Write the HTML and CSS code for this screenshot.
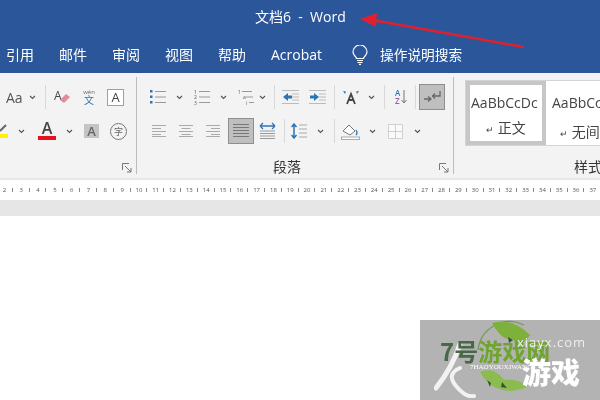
FILE: index.html
```html
<!DOCTYPE html>
<html lang="zh">
<head>
<meta charset="utf-8">
<title>文档6 - Word</title>
<link rel="stylesheet" href="styles.css">
</head>
<body>
<div class="app">
  <header class="head">
    <div class="title">文档6&nbsp; -&nbsp; Word</div>
    <nav class="tabs">
      <span class="tab">引用</span>
      <span class="tab t2">邮件</span>
      <span class="tab t2">审阅</span>
      <span class="tab t2">视图</span>
      <span class="tab t2">帮助</span>
      <span class="tab t2">Acrobat</span>
      <svg class="bulb" width="16" height="20" viewBox="0 0 16 20" fill="none" stroke="#fff" stroke-width="1.2"><path d="M4.5 13.5C4.300 11.500 1 10.500 1 7a7 7 0 0 1 14 0c0 3.500-3.300 4.500-3.500 6.500z"/><path d="M5 15.500h6M5.500 17.500h5M7 19.300h2"/></svg>
      <span class="tab search">操作说明搜索</span>
    </nav>
  </header>

  <section class="ribbon">
    <div class="group g1">
      <div class="row">
        <span class="aa">Aa</span>
        <svg class="chev c-aa" width="7" height="5" viewBox="0 0 7 5"><use href="#cv"/></svg>
        <i class="sep s-a"></i>
        <svg class="ic m1" width="16" height="18" viewBox="0 0 16 18"><text x="0" y="12" class="svgt" font-size="12" fill="#444">A</text><path d="M6 12l6-6 4 3-6 6z" fill="#e58a9b"/></svg>
        <span class="wen m2"><small>wén</small><b>文</b></span>
        <span class="boxa m3">A</span>
      </div>
      <div class="row r2">
        <svg class="ic" width="9" height="16" viewBox="0 0 9 16"><path d="M0 8l6-6" stroke="#666" stroke-width="2"/><rect y="11" width="8" height="4" fill="#fff200"/></svg>
        <svg class="chev m4" width="7" height="5" viewBox="0 0 7 5"><use href="#cv"/></svg>
        <span class="reda m5">A</span>
        <svg class="chev m6" width="7" height="5" viewBox="0 0 7 5"><use href="#cv"/></svg>
        <span class="graya m7">A</span>
        <span class="circ m8">字</span>
      </div>
      <svg class="launch" width="10" height="10" viewBox="0 0 10 10" fill="none" stroke="#777"><path d="M.5 7V.5H7M3 3l6 6M5 9h4V5"/></svg>
    </div>

    <div class="group g2">
      <div class="row">
        <svg class="ic l1" width="16" height="16" viewBox="0 0 16 16"><use href="#bul"/></svg>
        <svg class="chev l2" width="7" height="5" viewBox="0 0 7 5"><use href="#cv"/></svg>
        <svg class="ic l3" width="16" height="16" viewBox="0 0 16 16"><use href="#num"/></svg>
        <svg class="chev l2" width="7" height="5" viewBox="0 0 7 5"><use href="#cv"/></svg>
        <svg class="ic l3" width="16" height="16" viewBox="0 0 16 16"><use href="#mul"/></svg>
        <svg class="chev l4" width="7" height="5" viewBox="0 0 7 5"><use href="#cv"/></svg>
        <i class="sep l5"></i>
        <svg class="ic l6" width="17" height="14" viewBox="0 0 17 14"><use href="#lines"/><path d="M1 7l5-4v2.500h4v3H6V11z" fill="#2e75b6"/></svg>
        <svg class="ic l7" width="17" height="14" viewBox="0 0 17 14"><use href="#lines"/><path d="M10 7L5 3v2.500H1v3h4V11z" fill="#2e75b6"/></svg>
        <i class="sep l8"></i>
        <svg class="ic l9" width="16" height="15" viewBox="0 0 16 15"><path d="M4 14l4-10 4 10M5.500 10h5" fill="none" stroke="#444" stroke-width="1.800"/><path d="M0 1l3 .5L2 4zM16 1l-3 .5L14 4z" fill="#2e75b6"/></svg>
        <svg class="chev l10" width="7" height="5" viewBox="0 0 7 5"><use href="#cv"/></svg>
        <i class="sep l11"></i>
        <span class="az l12"><span class="az-t"><em>A</em><em class="z">Z</em></span><svg width="6" height="15" viewBox="0 0 6 15"><path d="M3 0v13M.5 10L3 13l2.500-3" fill="none" stroke="#777"/></svg></span>
        <i class="sep l13"></i>
        <span class="press pil"><svg width="17" height="14" viewBox="0 0 17 14" fill="none" stroke="#666" stroke-width="1.300"><path d="M16 1v5H9M11 3.500L8.500 6 11 8.500M0 9h6M4 6.500L7 9l-3 2.500"/></svg></span>
      </div>
      <div class="row r2">
        <svg class="ic b1" width="14" height="12" viewBox="0 0 14 12"><use href="#al"/></svg>
        <svg class="ic b2" width="14" height="12" viewBox="0 0 14 12"><use href="#ac"/></svg>
        <svg class="ic b2" width="14" height="12" viewBox="0 0 14 12"><use href="#ar"/></svg>
        <span class="press jus"><svg width="16" height="14" viewBox="0 0 16 14"><use href="#aj"/></svg></span>
        <svg class="ic b3" width="17" height="18" viewBox="0 0 17 18"><path d="M1 4h15M1 4l3-3M1 4l3 3M16 4l-3-3M16 4l-3 3" stroke="#2e75b6" fill="none" stroke-width="1.300"/><path d="M1 9h15M1 11.500h15M1 14h15M1 16.500h15" stroke="#999"/></svg>
        <i class="sep b4"></i>
        <svg class="ic b5" width="16" height="16" viewBox="0 0 16 16"><path d="M3 1v14M.5 4L3 1l2.500 3M.5 12L3 15l2.500-3" fill="none" stroke="#2e75b6" stroke-width="1.500"/><path d="M8 2h8M8 6h8M8 10h8M8 14h8" stroke="#aaa"/></svg>
        <svg class="chev b6" width="7" height="5" viewBox="0 0 7 5"><use href="#cv"/></svg>
        <i class="sep b7"></i>
        <svg class="ic b8" width="19" height="18" viewBox="0 0 19 18"><path d="M2 9l6-6 6 6-5 4z" fill="#fff" stroke="#777"/><path d="M15 8q2 3 0 5" stroke="#2e75b6" fill="none" stroke-width="1.300"/><rect x=".5" y="15" width="18" height="2.500" fill="#fff" stroke="#aaa"/></svg>
        <svg class="chev b9" width="7" height="5" viewBox="0 0 7 5"><use href="#cv"/></svg>
        <svg class="ic b10" width="15" height="15" viewBox="0 0 15 15" fill="#fafafa" stroke="#d0d0d0"><path d="M.5.500h14v14H.5zM7.500.500v14M.5 7.500h14"/></svg>
        <svg class="chev b11" width="7" height="5" viewBox="0 0 7 5"><use href="#cv"/></svg>
      </div>
      <div class="glabel">段落</div>
      <svg class="launch" width="10" height="10" viewBox="0 0 10 10" fill="none" stroke="#777"><path d="M.5 7V.5H7M3 3l6 6M5 9h4V5"/></svg>
    </div>

    <div class="group g3">
      <div class="gallery">
        <div class="style sel"><span class="sample">AaBbCcDc</span><span class="sname"><small>↵</small> 正文</span></div>
        <div class="style second"><span class="sample">AaBbCcDc</span><span class="sname"><small>↵</small> 无间隔</span></div>
      </div>
      <div class="glabel g3l">样式</div>
    </div>
  </section>

  <div class="ruler">
    <span>2</span><span>3</span><span>4</span><span>5</span><span>6</span><span>7</span><span>8</span><span>9</span><span>10</span><span>11</span><span>12</span><span>13</span><span>14</span><span>15</span><span>16</span><span>17</span><span>18</span><span>19</span><span>20</span><span>21</span><span>22</span><span>23</span><span>24</span><span>25</span><span>26</span><span>27</span><span>28</span><span>29</span><span>30</span><span>31</span><span>32</span><span>33</span><span>34</span><span>35</span><span>36</span><span>37</span>
  </div>
  <div class="band"></div>
  <main class="doc"></main>
</div>

<svg class="arrow" width="600" height="72" viewBox="0 0 600 72"><path d="M524 47L372 20" stroke="#e0202c" stroke-width="2.500" fill="none"/><path d="M360 19l17-6-1 14z" fill="#e0202c"/></svg>

<div class="mark">
  <svg class="ring" width="72" height="74" viewBox="0 0 72 74" fill="none"><path d="M6 30A32 32 0 0 1 52 5" stroke="#6f9a50" stroke-width="1.200"/><path d="M20 3q20-6 38 12q-8 14-18 4q-10 2-20-16z" fill="#7db13c"/><path d="M8 52A34 34 0 0 0 56 66q-12-8-24-6q-10-14-24-8z" fill="#8cbb50"/><path d="M36 17l5 3-4 3zM15 60l4 3-1 4zM30 62l5 6-6-1z" fill="#36543a"/></svg>
  <svg class="swoosh" width="44" height="56" viewBox="0 0 44 56" fill="none" stroke="#f2f2f2" stroke-linecap="round"><path d="M26 2Q18 26 2 46" stroke-width="5"/><path d="M26 26q-14 6-4 18t18 10" stroke-width="4"/></svg>
  <span class="seven"><span class="sv-a">7号</span><span class="sv-b">游戏网</span></span>
  <span class="url">xiayx.com</span>
  <span class="big">游戏</span>
  <span class="pin">7HAOYOUXIWANG</span>
</div>

<svg class="defs" width="0" height="0">
  <defs>
    <path id="cv" d="M1 1l2.500 2.500L6 1" fill="none" stroke="#555" stroke-width="1.100"/>
    <g id="bul"><path d="M5 2.500h11M5 8h11M5 13.500h11" stroke="#999"/><path d="M0 1h2.500v2.500H0zM0 6.500h2.500v2.500H0zM0 12h2.500v2.500H0z" fill="#2e75b6"/></g>
    <g id="num"><path d="M5 2.500h11M5 8h11M5 13.500h11" stroke="#999"/><text x="0" y="4.500" class="svgt" font-size="5" fill="#555">1</text><text x="0" y="10" class="svgt" font-size="5" fill="#555">2</text><text x="0" y="15.500" class="svgt" font-size="5" fill="#555">3</text></g>
    <g id="mul"><path d="M4 2.500h10M8 8h7M11 13.500h5" stroke="#999"/><text x="0" y="4.500" class="svgt" font-size="5" fill="#555">1</text><text x="5" y="10" class="svgt" font-size="5" fill="#555">a</text><text x="8" y="15.500" class="svgt" font-size="5" fill="#555">i</text></g>
    <g id="lines"><path d="M0 .500h17M10 4h7M10 7h7M10 10h7M0 13.500h17" stroke="#bbb"/></g>
    <path id="al" d="M0 .500h14M0 3.500h9M0 6.500h14M0 9.500h9M0 11.500h14" stroke="#aaa"/>
    <path id="ac" d="M0 .500h14M2.500 3.500h9M0 6.500h14M2.500 9.500h9M0 11.500h14" stroke="#aaa"/>
    <path id="ar" d="M0 .500h14M5 3.500h9M0 6.500h14M5 9.500h9M0 11.500h14" stroke="#aaa"/>
    <path id="aj" d="M0 .500h16M0 3.500h16M0 6.500h16M0 9.500h16M0 12.500h16" stroke="#777"/>
  </defs>
</svg>
</body>
</html>
```
FILE: styles.css
```css
* { box-sizing: border-box; }
html, body { margin: 0; padding: 0; }
body {
  width: 600px;
  height: 400px;
  overflow: hidden;
  position: relative;
  background: #fff;
  font-family: "Open Sans", "Noto Sans CJK SC", sans-serif;
  color: #444;
}
.app { width: 600px; height: 400px; display: flex; flex-direction: column; overflow: hidden; filter: blur(.35px); }

.head { height: 73px; background: #2b579a; color: #fff; flex: none; }
.title { height: 35px; padding-top: 6px; padding-left: 255px; font-size: 14px; line-height: 22px; white-space: nowrap; }
.tabs { display: flex; align-items: center; height: 38px; padding-left: 6px; padding-top: 2px; }
.tab { font-size: 14px; line-height: 20px; white-space: nowrap; }
.t2 { margin-left: 25px; }
.bulb { margin-left: 30px; flex: none; }
.tab.search { margin-left: 12px; font-size: 13.700px; }

.ribbon { height: 105px; background: #f3f3f3; display: flex; flex: none; }
.group { position: relative; flex: none; border-right: 1px solid #bdbdbd; margin: 4px 0; }
.g1 { width: 137px; }
.g2 { width: 317px; }
.g3 { border: 0; flex: 1; padding-left: 11px; }
.row { display: flex; align-items: center; height: 34px; margin-top: 3px; }
.r2 { margin-top: 0; }
.row > * { flex: none; }
.launch { position: absolute; right: 4px; bottom: 1px; }

.sep { display: block; width: 1px; height: 24px; background: #d8d8d8; }
.chev { display: block; }
.ic { display: block; }
.svgt { font-family: "Open Sans", sans-serif; }

.aa { margin-left: 6px; font-size: 14px; width: 16px; color: #555; }
.c-aa { margin-left: 7px; }
.s-a { margin-left: 9px; }
.m1 { margin-left: 8px; }
.m2 { margin-left: 11px; }
.wen { width: 16px; display: flex; flex-direction: column; align-items: center; }
.wen small { font-size: 6px; color: #666; line-height: 6px; }
.wen b { font-size: 10px; font-weight: 400; color: #2e75b6; line-height: 10px; }
.m3 { margin-left: 10px; }
.boxa { width: 17px; height: 17px; border: 1px solid #8aa; background: #fff; font-size: 13px; line-height: 15px; text-align: center; color: #444; }
.m4 { margin-left: 9px; }
.m5 { margin-left: 13px; }
.reda { width: 18px; height: 18px; font-size: 16px; line-height: 13px; font-weight: 600; text-align: center; border-bottom: 4px solid #e8101a; color: #444; }
.m6 { margin-left: 10px; }
.m7 { margin-left: 11px; }
.graya { width: 15px; height: 14px; background: #c4c4c4; color: #666; font-size: 13px; font-weight: 600; line-height: 14px; text-align: center; }
.m8 { margin-left: 11px; }
.circ { width: 17px; height: 17px; border: 1px solid #777; border-radius: 50%; font-size: 9px; line-height: 15px; text-align: center; color: #666; }

.l1 { margin-left: 13px; }
.l2 { margin-left: 10px; }
.l3 { margin-left: 11px; }
.l4 { margin-left: 5px; }
.l5 { margin-left: 8px; }
.l6 { margin-left: 7px; }
.l7 { margin-left: 10px; }
.l8 { margin-left: 8px; }
.l9 { margin-left: 8px; }
.l10 { margin-left: 9px; }
.l11 { margin-left: 9px; }
.l12 { margin-left: 10px; display: flex; gap: 1px; align-items: center; }
.az-t { display: flex; flex-direction: column; font-size: 8px; line-height: 8px; }
.az-t em { font-style: normal; font-weight: 600; color: #2e75b6; }
.az-t .z { color: #9a5fb5; }
.l13 { margin-left: 8px; }
.press { display: flex; align-items: center; justify-content: center; width: 26px; height: 26px; background: #bfbfbf; border: 1px solid #8e8e8e; }
.pil { margin-left: 3px; }
.b1 { margin-left: 15px; }
.b2 { margin-left: 13px; }
.jus { margin-left: 8px; }
.b3 { margin-left: 5px; }
.b4 { margin-left: 8px; }
.b5 { margin-left: 6px; }
.b6 { margin-left: 10px; }
.b7 { margin-left: 10px; }
.b8 { margin-left: 6px; }
.b9 { margin-left: 9px; }
.b10 { margin-left: 12px; }
.b11 { margin-left: 11px; }
.glabel { position: absolute; left: 136px; bottom: -3px; font-size: 14px; line-height: 20px; color: #333; }
.g3l { left: 120px; }

.gallery { display: flex; width: 147px; height: 66px; margin-top: 3px; background: #fff; border: 1px solid #d4d4d4; border-right: 0; overflow: hidden; }
.style { flex: none; width: 80px; display: flex; flex-direction: column; align-items: center; overflow: hidden; padding-top: 11px; }
.second { margin-left: 1px; }
.sel { border: 4px solid #c6c6c6; padding-top: 7px; }
.sample { font-family: "Open Sans", sans-serif; font-size: 14px; line-height: 22px; white-space: nowrap; width: 70px; overflow: hidden; color: #444; }
.sname { font-size: 14px; line-height: 22px; margin-top: 7px; white-space: nowrap; color: #444; }
.sname small { font-size: 9px; }

.ruler { height: 22px; width: 604px; flex: none; display: flex; margin-left: -4px; font-size: 6px; color: #555; background: #fff; border-top: 2px solid #e8e8e8; }
.ruler span { flex: none; width: 16.820px; text-align: center; line-height: 20px; background: linear-gradient(#888, #888) right center / 1px 4px no-repeat; }
.band { height: 16px; background: #e6e6e6; flex: none; }
.doc { flex: 1; background: #fff; }

.arrow { position: absolute; left: 0; top: 0; filter: blur(.3px); }
.defs { position: absolute; }

.mark { position: absolute; left: 420px; top: 320px; width: 180px; height: 80px; background: #b3b3b3; overflow: hidden; filter: blur(.4px); }
.ring { position: absolute; left: 52px; top: 0; }
.swoosh { position: absolute; left: 14px; top: 22px; }
.seven { position: absolute; left: 20px; top: 16px; font-size: 24px; line-height: 30px; font-weight: 700; white-space: nowrap; font-family: "Noto Sans CJK SC", sans-serif; }
.sv-a { color: #47694a; }
.sv-b { color: #6fa52f; }
.url { position: absolute; left: 97px; top: 15px; font-size: 13px; line-height: 14px; color: #eee; letter-spacing: 1px; }
.big { position: absolute; left: 102px; top: 31px; font-size: 29px; line-height: 40px; font-weight: 900; color: #fff; font-family: "Noto Sans CJK SC", sans-serif; }
.pin { position: absolute; left: 50px; top: 42px; font-family: "Liberation Serif", serif; font-size: 7px; line-height: 10px; color: #fff; white-space: nowrap; }
```
